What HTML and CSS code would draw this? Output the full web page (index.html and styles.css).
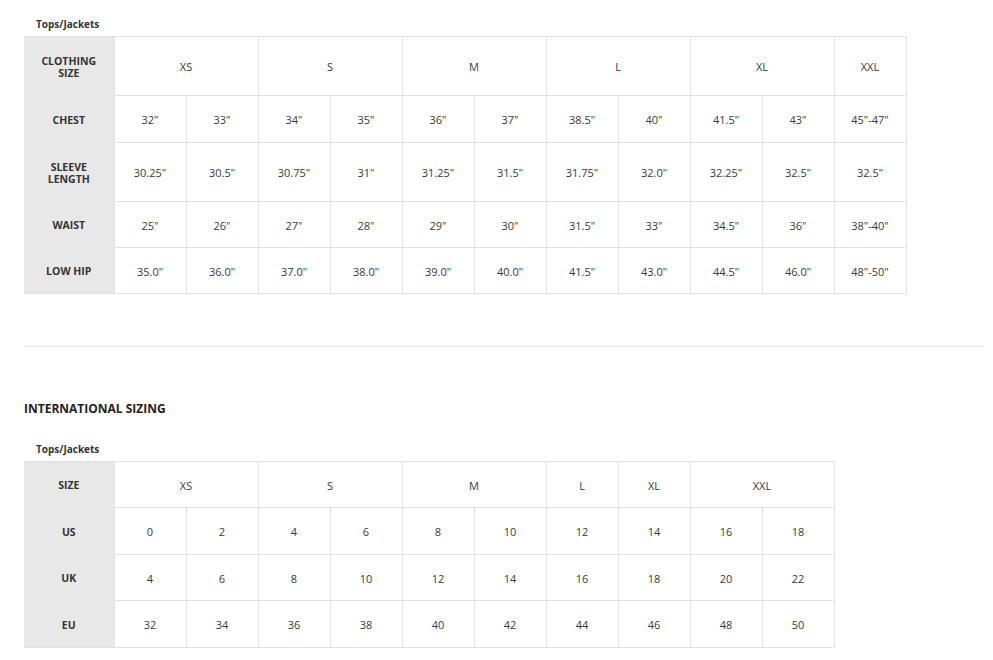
FILE: index.html
```html
<!DOCTYPE html>
<html>
<head>
<meta charset="utf-8">
<link rel="stylesheet" href="styles.css">
</head>
<body>
<div class="page">
  <section class="chart">
    <div class="caption">Tops/Jackets</div>
    <table class="size-table">
      <colgroup>
        <col class="c-head"><col class="c-data"><col class="c-data"><col class="c-data"><col class="c-data"><col class="c-data"><col class="c-data"><col class="c-data"><col class="c-data"><col class="c-data"><col class="c-data"><col class="c-data">
      </colgroup>
      <tr class="tall">
        <th>CLOTHING<br>SIZE</th>
        <td colspan="2">XS</td><td colspan="2">S</td><td colspan="2">M</td><td colspan="2">L</td><td colspan="2">XL</td><td>XXL</td>
      </tr>
      <tr class="mid">
        <th>CHEST</th>
        <td>32"</td><td>33"</td><td>34"</td><td>35"</td><td>36"</td><td>37"</td><td>38.5"</td><td>40"</td><td>41.5"</td><td>43"</td><td>45"-47"</td>
      </tr>
      <tr class="tall">
        <th>SLEEVE<br>LENGTH</th>
        <td>30.25"</td><td>30.5"</td><td>30.75"</td><td>31"</td><td>31.25"</td><td>31.5"</td><td>31.75"</td><td>32.0"</td><td>32.25"</td><td>32.5"</td><td>32.5"</td>
      </tr>
      <tr class="short">
        <th>WAIST</th>
        <td>25"</td><td>26"</td><td>27"</td><td>28"</td><td>29"</td><td>30"</td><td>31.5"</td><td>33"</td><td>34.5"</td><td>36"</td><td>38"-40"</td>
      </tr>
      <tr class="short">
        <th>LOW HIP</th>
        <td>35.0"</td><td>36.0"</td><td>37.0"</td><td>38.0"</td><td>39.0"</td><td>40.0"</td><td>41.5"</td><td>43.0"</td><td>44.5"</td><td>46.0"</td><td>48"-50"</td>
      </tr>
    </table>
  </section>

  <hr class="divider">

  <h2 class="section-title">INTERNATIONAL SIZING</h2>

  <section class="chart">
    <div class="caption">Tops/Jackets</div>
    <table class="size-table">
      <colgroup>
        <col class="c-head"><col class="c-data"><col class="c-data"><col class="c-data"><col class="c-data"><col class="c-data"><col class="c-data"><col class="c-data"><col class="c-data"><col class="c-data"><col class="c-data">
      </colgroup>
      <tr class="short">
        <th>SIZE</th>
        <td colspan="2">XS</td><td colspan="2">S</td><td colspan="2">M</td><td>L</td><td>XL</td><td colspan="2">XXL</td>
      </tr>
      <tr class="mid">
        <th>US</th>
        <td>0</td><td>2</td><td>4</td><td>6</td><td>8</td><td>10</td><td>12</td><td>14</td><td>16</td><td>18</td>
      </tr>
      <tr class="short">
        <th>UK</th>
        <td>4</td><td>6</td><td>8</td><td>10</td><td>12</td><td>14</td><td>16</td><td>18</td><td>20</td><td>22</td>
      </tr>
      <tr class="mid">
        <th>EU</th>
        <td>32</td><td>34</td><td>36</td><td>38</td><td>40</td><td>42</td><td>44</td><td>46</td><td>48</td><td>50</td>
      </tr>
    </table>
  </section>
</div>
</body>
</html>
```

FILE: styles.css
```css
html, body {
  margin: 0;
  padding: 0;
  background: #fff;
}
body {
  font-family: "Open Sans", "Liberation Sans", sans-serif;
  color: #333;
}
.page {
  padding: 17px 9px 0 24px;
}
.caption {
  font-size: 10px;
  font-weight: 700;
  line-height: 14px;
  color: #333;
  padding-left: 12px;
  margin-bottom: 5px;
}
.size-table {
  border-collapse: collapse;
  table-layout: fixed;
}
.c-head { width: 90px; }
.c-data { width: 72px; }
.size-table th,
.size-table td {
  border: 1px solid #e2e2e2;
  text-align: center;
  vertical-align: middle;
  padding: 0;
  line-height: 12px;
}
.size-table th {
  background: #e8e8e8;
  border-left: none;
  border-top-color: #e8e8e8;
  border-bottom-color: #e8e8e8;
  font-size: 10.5px;
  line-height: 12.5px;
  padding-top: 2px;
  font-weight: 700;
  color: #333;
}
.size-table tr:last-child th { border-bottom-color: #e2e2e2; }
.size-table tr:first-child th { border-top-color: #e2e2e2; }
.size-table td {
  font-size: 11px;
  font-weight: 400;
  color: #3a3a3a;
  padding-top: 2px;
}
.size-table tr.short th, .size-table tr.short td { height: 43px; }
.size-table tr.mid th, .size-table tr.mid td { height: 44px; }
.size-table tr.tall th, .size-table tr.tall td { height: 56px; }
.divider {
  border: none;
  border-top: 1px solid #e6e6e6;
  margin: 52px 0 0 0;
}
.section-title {
  font-size: 12px;
  font-weight: 700;
  color: #222;
  margin: 54px 0 25px 0;
  line-height: 16px;
}
```
